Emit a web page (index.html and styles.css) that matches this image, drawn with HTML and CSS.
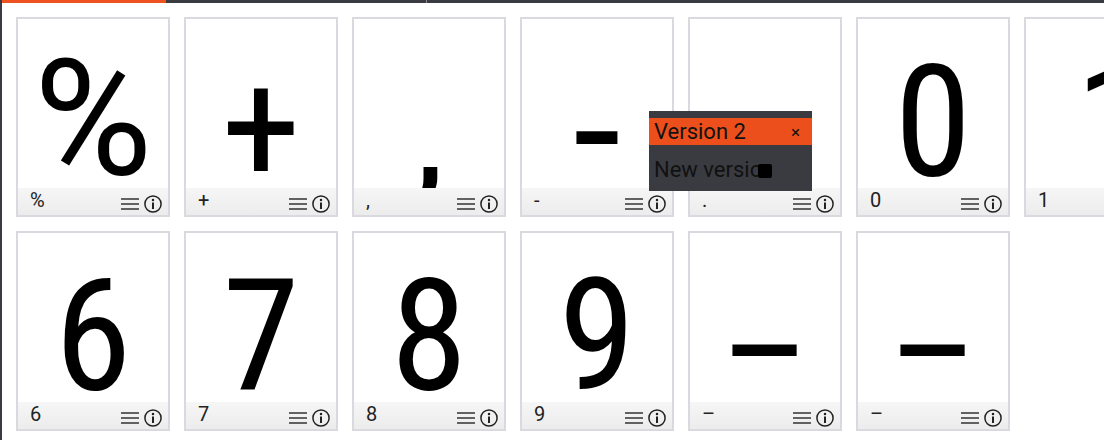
FILE: index.html
```html
<!DOCTYPE html>
<html>
<head>
<meta charset="utf-8">
<link rel="stylesheet" href="styles.css">
</head>
<body>
<div class="frame">
  <div class="topbar">
    <div class="tab active"></div>
    <div class="tab mid"></div>
    <div class="tab rest"></div>
  </div>
  <div class="grid">
    <div class="row">
      <div class="card"><div class="glyph pct">%</div><div class="foot"><span class="label">%</span><span class="icons"><svg class="menu" viewBox="0 0 18 12" width="18" height="12"><path d="M0 1h18M0 6h18M0 11h18" stroke="#333" stroke-width="1.7"/></svg><svg class="info" viewBox="0 0 18 18" width="18" height="18"><circle cx="9" cy="9" r="8.1" fill="none" stroke="#222" stroke-width="1.5"/><circle cx="9" cy="4.9" r="1.25" fill="#222"/><path d="M9 7.4v6.6" stroke="#222" stroke-width="2"/></svg></span></div></div>
      <div class="card"><div class="glyph plus">+</div><div class="foot"><span class="label">+</span><span class="icons"><svg class="menu" viewBox="0 0 18 12" width="18" height="12"><path d="M0 1h18M0 6h18M0 11h18" stroke="#333" stroke-width="1.7"/></svg><svg class="info" viewBox="0 0 18 18" width="18" height="18"><circle cx="9" cy="9" r="8.1" fill="none" stroke="#222" stroke-width="1.5"/><circle cx="9" cy="4.9" r="1.25" fill="#222"/><path d="M9 7.4v6.6" stroke="#222" stroke-width="2"/></svg></span></div></div>
      <div class="card"><div class="glyph comma">,</div><div class="foot"><span class="label">,</span><span class="icons"><svg class="menu" viewBox="0 0 18 12" width="18" height="12"><path d="M0 1h18M0 6h18M0 11h18" stroke="#333" stroke-width="1.7"/></svg><svg class="info" viewBox="0 0 18 18" width="18" height="18"><circle cx="9" cy="9" r="8.1" fill="none" stroke="#222" stroke-width="1.5"/><circle cx="9" cy="4.9" r="1.25" fill="#222"/><path d="M9 7.4v6.6" stroke="#222" stroke-width="2"/></svg></span></div></div>
      <div class="card"><div class="glyph hyphen">-</div><div class="foot"><span class="label">-</span><span class="icons"><svg class="menu" viewBox="0 0 18 12" width="18" height="12"><path d="M0 1h18M0 6h18M0 11h18" stroke="#333" stroke-width="1.7"/></svg><svg class="info" viewBox="0 0 18 18" width="18" height="18"><circle cx="9" cy="9" r="8.1" fill="none" stroke="#222" stroke-width="1.5"/><circle cx="9" cy="4.9" r="1.25" fill="#222"/><path d="M9 7.4v6.6" stroke="#222" stroke-width="2"/></svg></span></div></div>
      <div class="card"><div class="glyph">.</div><div class="foot"><span class="label">.</span><span class="icons"><svg class="menu" viewBox="0 0 18 12" width="18" height="12"><path d="M0 1h18M0 6h18M0 11h18" stroke="#333" stroke-width="1.7"/></svg><svg class="info" viewBox="0 0 18 18" width="18" height="18"><circle cx="9" cy="9" r="8.1" fill="none" stroke="#222" stroke-width="1.5"/><circle cx="9" cy="4.9" r="1.25" fill="#222"/><path d="M9 7.4v6.6" stroke="#222" stroke-width="2"/></svg></span></div></div>
      <div class="card"><div class="glyph">0</div><div class="foot"><span class="label">0</span><span class="icons"><svg class="menu" viewBox="0 0 18 12" width="18" height="12"><path d="M0 1h18M0 6h18M0 11h18" stroke="#333" stroke-width="1.7"/></svg><svg class="info" viewBox="0 0 18 18" width="18" height="18"><circle cx="9" cy="9" r="8.1" fill="none" stroke="#222" stroke-width="1.5"/><circle cx="9" cy="4.9" r="1.25" fill="#222"/><path d="M9 7.4v6.6" stroke="#222" stroke-width="2"/></svg></span></div></div>
      <div class="card"><div class="glyph one">1</div><div class="foot"><span class="label">1</span><span class="icons"><svg class="menu" viewBox="0 0 18 12" width="18" height="12"><path d="M0 1h18M0 6h18M0 11h18" stroke="#333" stroke-width="1.7"/></svg><svg class="info" viewBox="0 0 18 18" width="18" height="18"><circle cx="9" cy="9" r="8.1" fill="none" stroke="#222" stroke-width="1.5"/><circle cx="9" cy="4.9" r="1.25" fill="#222"/><path d="M9 7.4v6.6" stroke="#222" stroke-width="2"/></svg></span></div></div>
      <div class="card"><div class="glyph">2</div><div class="foot"><span class="label">2</span></div></div>
      <div class="card"><div class="glyph">3</div><div class="foot"><span class="label">3</span></div></div>
    </div>
    <div class="row">
      <div class="card"><div class="glyph">6</div><div class="foot"><span class="label">6</span><span class="icons"><svg class="menu" viewBox="0 0 18 12" width="18" height="12"><path d="M0 1h18M0 6h18M0 11h18" stroke="#333" stroke-width="1.7"/></svg><svg class="info" viewBox="0 0 18 18" width="18" height="18"><circle cx="9" cy="9" r="8.1" fill="none" stroke="#222" stroke-width="1.5"/><circle cx="9" cy="4.9" r="1.25" fill="#222"/><path d="M9 7.4v6.6" stroke="#222" stroke-width="2"/></svg></span></div></div>
      <div class="card"><div class="glyph">7</div><div class="foot"><span class="label">7</span><span class="icons"><svg class="menu" viewBox="0 0 18 12" width="18" height="12"><path d="M0 1h18M0 6h18M0 11h18" stroke="#333" stroke-width="1.7"/></svg><svg class="info" viewBox="0 0 18 18" width="18" height="18"><circle cx="9" cy="9" r="8.1" fill="none" stroke="#222" stroke-width="1.5"/><circle cx="9" cy="4.9" r="1.25" fill="#222"/><path d="M9 7.4v6.6" stroke="#222" stroke-width="2"/></svg></span></div></div>
      <div class="card"><div class="glyph">8</div><div class="foot"><span class="label">8</span><span class="icons"><svg class="menu" viewBox="0 0 18 12" width="18" height="12"><path d="M0 1h18M0 6h18M0 11h18" stroke="#333" stroke-width="1.7"/></svg><svg class="info" viewBox="0 0 18 18" width="18" height="18"><circle cx="9" cy="9" r="8.1" fill="none" stroke="#222" stroke-width="1.5"/><circle cx="9" cy="4.9" r="1.25" fill="#222"/><path d="M9 7.4v6.6" stroke="#222" stroke-width="2"/></svg></span></div></div>
      <div class="card"><div class="glyph">9</div><div class="foot"><span class="label">9</span><span class="icons"><svg class="menu" viewBox="0 0 18 12" width="18" height="12"><path d="M0 1h18M0 6h18M0 11h18" stroke="#333" stroke-width="1.7"/></svg><svg class="info" viewBox="0 0 18 18" width="18" height="18"><circle cx="9" cy="9" r="8.1" fill="none" stroke="#222" stroke-width="1.5"/><circle cx="9" cy="4.9" r="1.25" fill="#222"/><path d="M9 7.4v6.6" stroke="#222" stroke-width="2"/></svg></span></div></div>
      <div class="card"><div class="glyph dash">–</div><div class="foot"><span class="label">–</span><span class="icons"><svg class="menu" viewBox="0 0 18 12" width="18" height="12"><path d="M0 1h18M0 6h18M0 11h18" stroke="#333" stroke-width="1.7"/></svg><svg class="info" viewBox="0 0 18 18" width="18" height="18"><circle cx="9" cy="9" r="8.1" fill="none" stroke="#222" stroke-width="1.5"/><circle cx="9" cy="4.9" r="1.25" fill="#222"/><path d="M9 7.4v6.6" stroke="#222" stroke-width="2"/></svg></span></div></div>
      <div class="card"><div class="glyph dash">–</div><div class="foot"><span class="label">–</span><span class="icons"><svg class="menu" viewBox="0 0 18 12" width="18" height="12"><path d="M0 1h18M0 6h18M0 11h18" stroke="#333" stroke-width="1.7"/></svg><svg class="info" viewBox="0 0 18 18" width="18" height="18"><circle cx="9" cy="9" r="8.1" fill="none" stroke="#222" stroke-width="1.5"/><circle cx="9" cy="4.9" r="1.25" fill="#222"/><path d="M9 7.4v6.6" stroke="#222" stroke-width="2"/></svg></span></div></div>
    </div>
  </div>
  <div class="popup">
    <div class="pop-strip"></div>
    <div class="pop-title"><span>Version 2</span><span class="close">×</span></div>
    <div class="pop-body"><span>New versio</span><span class="cursor"></span></div>
  </div>
</div>
</body>
</html>
```
FILE: styles.css
```css
html, body {
  margin: 0;
  padding: 0;
  width: 1104px;
  height: 440px;
  overflow: hidden;
  background: #ffffff;
  font-family: Roboto, "Liberation Sans", sans-serif;
}
.frame {
  position: relative;
  width: 1104px;
  height: 440px;
  border-left: 2px solid #3a3b41;
  box-sizing: border-box;
  overflow: hidden;
}
.topbar {
  display: flex;
  height: 3px;
  background: #3a3b41;
}
.tab.active {
  width: 164px;
  background: #ee5220;
}
.tab.mid {
  width: 260px;
  border-right: 1px solid #8a8a90;
}
.tab.rest {
  flex: 1;
}
.grid {
  display: flex;
  flex-direction: column;
  gap: 14px;
  padding: 14px 0 0 14px;
}
.row {
  display: flex;
  gap: 14px;
}
.card {
  flex: 0 0 154px;
  width: 154px;
  height: 200px;
  box-sizing: border-box;
  border: 2px solid #d9d9df;
  display: flex;
  flex-direction: column;
  background: #fff;
}
.glyph {
  flex: 1;
  overflow: hidden;
  text-align: center;
  font-size: 156px;
  font-stretch: 80%;
  line-height: 156px;
  padding-top: 25px;
  color: #000;
  box-sizing: border-box;
  white-space: nowrap;
}
.glyph.pct {
  font-stretch: 100%;
  font-size: 162px;
  padding-top: 22px;
}
.glyph.plus {
  font-size: 160px;
  padding-top: 31px;
}
.glyph.hyphen {
  font-stretch: 100%;
  font-size: 172px;
  padding-top: 34px;
}
.glyph.comma {
  font-stretch: 100%;
  padding-top: 34px;
}
.glyph.dash {
  padding-top: 42px;
}
.glyph.one {
  padding-left: 26px;
}
.foot {
  height: 27px;
  flex: 0 0 27px;
  display: flex;
  align-items: flex-start;
  justify-content: space-between;
  padding: 0 6px 0 12px;
  background: linear-gradient(#f6f6f6, #ececec);
}
.label {
  font-size: 20px;
  line-height: 25px;
  color: #222;
}
.icons {
  display: flex;
  align-items: center;
  gap: 5px;
  padding-top: 7px;
}
.menu {
  display: block;
}
.info {
  display: block;
}
.popup {
  position: absolute;
  left: 647px;
  top: 111px;
  width: 163px;
  height: 80px;
  background: #3a3b41;
  display: flex;
  flex-direction: column;
}
.pop-strip {
  height: 7px;
}
.pop-title {
  height: 27px;
  background: #ec4f1c;
  display: flex;
  align-items: center;
  justify-content: space-between;
  padding: 0 12px 0 5px;
  font-size: 22px;
  color: #111;
}
.close {
  font-size: 17px;
}
.pop-body {
  display: flex;
  align-items: center;
  padding: 12px 0 0 5px;
  font-size: 22px;
  color: #111;
}
.cursor {
  display: inline-block;
  width: 14px;
  height: 14px;
  background: #000;
  border-radius: 2px;
  margin-left: -4px;
  margin-top: 2px;
}
```
